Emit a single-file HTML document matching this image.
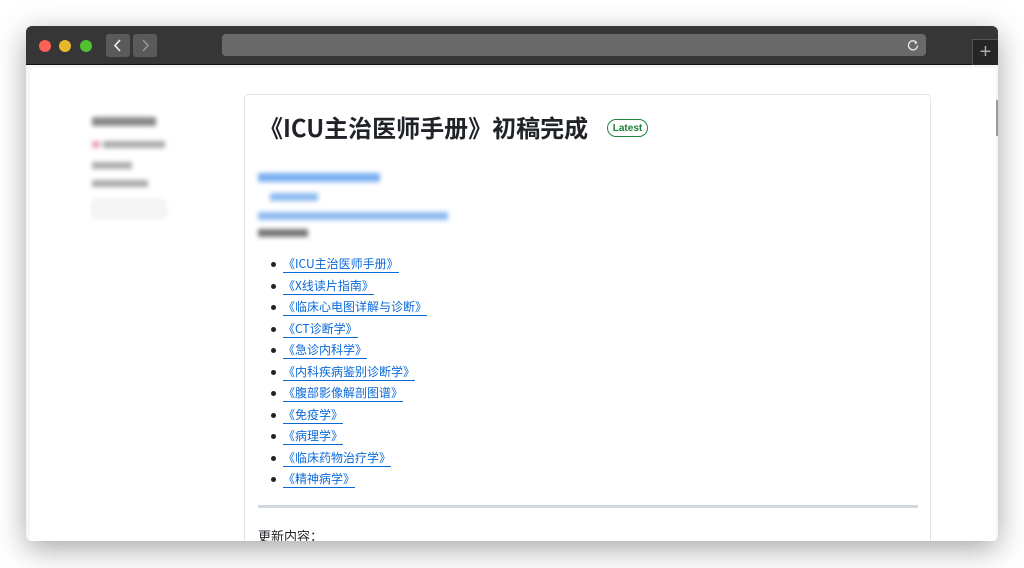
<!DOCTYPE html>
<html><head><meta charset="utf-8"><style>
*{margin:0;padding:0;box-sizing:border-box}
body{width:1024px;height:568px;background:#fff;position:relative;overflow:hidden;font-family:"Liberation Sans","Noto Sans CJK SC",sans-serif}
.win{position:absolute;left:26px;top:26px;width:972px;height:515px;border-radius:6px;box-shadow:0 8px 30px rgba(0,0,0,.35);overflow:hidden;background:#fff}
.bar{position:absolute;left:0;top:0;width:972px;height:39px;background:#363636;border-bottom:1px solid #111}
.dot{position:absolute;top:14px;width:12px;height:12px;border-radius:50%}
.nb{position:absolute;top:8px;width:24px;height:23px;background:#5a5a5a;border-radius:3px;text-align:center}
.url{position:absolute;left:196px;top:8px;width:704px;height:22px;background:#6a6a6a;border-radius:4px}
.plus{position:absolute;left:946px;top:13px;width:26px;height:26px;background:#262626;border-left:1px solid #555;border-top:1px solid #555;color:#aaa;font-size:20px;text-align:center;line-height:24px}
.content{position:absolute;left:0;top:39px;width:972px;height:476px;background:#f6f6f6}
.page{position:absolute;left:4px;top:3px;width:966px;height:473px;background:#fff;border-radius:4px 4px 0 0;overflow:hidden}
.inner{position:absolute;left:-30px;top:-68px;width:1024px;height:568px}
.card{position:absolute;left:244px;top:94px;width:687px;height:460px;border:1px solid #e3e3e3;border-radius:5px;background:#fff}
.blur{filter:blur(2.5px)}
h1{position:absolute;left:259px;top:111px;font-size:24px;font-weight:bold;color:#1f2328;white-space:nowrap;font-family:"Noto Sans CJK SC",sans-serif;line-height:32px}
.badge{position:absolute;left:607px;top:119px;width:41px;height:18px;border:1px solid #1f883d;border-radius:9px;color:#1a7f37;font-size:10px;font-weight:bold;text-align:center;line-height:18px}
ul{position:absolute;left:258px;top:254px;list-style:none}
li{height:21.5px;font-size:12px;line-height:20px;position:relative;padding-left:25px;font-family:"Noto Sans CJK SC",sans-serif}
li:before{content:"";position:absolute;left:13px;top:8px;width:5px;height:5px;border-radius:50%;background:#222}
li a{color:#0969da;text-decoration:none;border-bottom:1px solid #0969da}
</style></head><body>
<div class="win">
<div class="bar">
<div class="dot" style="left:13px;background:#fe5f57"></div>
<div class="dot" style="left:33px;background:#e6b92a"></div>
<div class="dot" style="left:54px;background:#4fc230"></div>
<div class="nb" style="left:80px"><svg width="24" height="23" viewBox="0 0 24 23"><path d="M14 6L9 11.5L14 17" fill="none" stroke="#eee" stroke-width="1.6"/></svg></div>
<div class="nb" style="left:107px"><svg width="24" height="23" viewBox="0 0 24 23"><path d="M10 6L15 11.5L10 17" fill="none" stroke="#999" stroke-width="1.4"/></svg></div>
<div class="url"><svg style="position:absolute;right:6px;top:4px" width="14" height="14" viewBox="0 0 14 14"><path d="M10.5 4.5A4.5 4.5 0 1 0 11.5 7.5" fill="none" stroke="#e8e8e8" stroke-width="1.3"/><path d="M8.5 2.5L11.5 4.5L9 6.5Z" fill="#e8e8e8"/></svg></div>
<div class="plus">+</div>
</div>
<div class="content"><div class="page"><div class="inner">
<div class="card"></div>
<div class="blur">
<div style="position:absolute;left:92px;top:117px;width:64px;height:9px;background:#888"></div>
<div style="position:absolute;left:92px;top:141px;width:8px;height:7px;background:#e9a3b5"></div>
<div style="position:absolute;left:103px;top:141px;width:62px;height:7px;background:#aaa"></div>
<div style="position:absolute;left:92px;top:162px;width:40px;height:7px;background:#aaa"></div>
<div style="position:absolute;left:92px;top:180px;width:56px;height:7px;background:#aaa"></div>
<div style="position:absolute;left:92px;top:200px;width:74px;height:18px;border:1px solid #ddd;border-radius:4px;background:#f6f6f6"></div>
<div style="position:absolute;left:258px;top:173px;width:122px;height:9px;background:#7aaff0"></div>
<div style="position:absolute;left:270px;top:193px;width:48px;height:8px;background:#8dbaf0"></div>
<div style="position:absolute;left:258px;top:212px;width:190px;height:8px;background:#8dbaf0"></div>
<div style="position:absolute;left:258px;top:229px;width:50px;height:8px;background:#777"></div>
</div>
<h1>《ICU主治医师手册》初稿完成</h1>
<div class="badge">Latest</div>
<ul>
<li><a>《ICU主治医师手册》</a></li>
<li><a>《X线读片指南》</a></li>
<li><a>《临床心电图详解与诊断》</a></li>
<li><a>《CT诊断学》</a></li>
<li><a>《急诊内科学》</a></li>
<li><a>《内科疾病鉴别诊断学》</a></li>
<li><a>《腹部影像解剖图谱》</a></li>
<li><a>《免疫学》</a></li>
<li><a>《病理学》</a></li>
<li><a>《临床药物治疗学》</a></li>
<li><a>《精神病学》</a></li>
</ul>
<div style="position:absolute;left:258px;top:505px;width:660px;height:3px;background:#d0d7de"></div>
<div style="position:absolute;left:258px;top:528px;font-size:13px;color:#1f2328;font-family:'Noto Sans CJK SC',sans-serif;line-height:16px">更新内容：</div>
</div></div></div>
<div style="position:absolute;left:970px;top:74px;width:2px;height:36px;background:#999"></div>
</div>
</body></html>
